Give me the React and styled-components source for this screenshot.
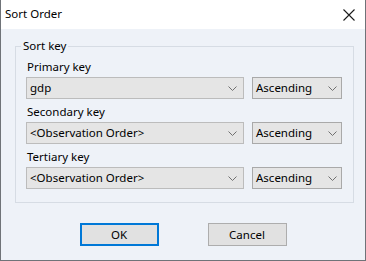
import styled, { createGlobalStyle } from "styled-components";

// --------------------------------------------------

const GlobalStyle = createGlobalStyle`
	html, body {
		margin: 0;
		padding: 0;
		background: #eef2f8;
	}
	body {
		font-family: "Noto Sans", "Liberation Sans", sans-serif;
		font-size: 11.5px;
		color: #000;
	}
`;

const Window = styled.div`
	width: 366px;
	height: 261px;
	box-sizing: border-box;
	display: flex;
	flex-direction: column;
	background: #eef2f8;
	border: 1px solid #6f7378;
	border-top: none;
	overflow: hidden;
`;

const TitleBar = styled.div`
	height: 29px;
	flex: none;
	display: flex;
	align-items: center;
	justify-content: space-between;
	background: #fff;
	padding: 0 10px 0 4px;
`;

const Title = styled.div`
	font-size: 11.5px;
	line-height: 16px;
	margin-top: -2px;
`;

const CloseButton = styled.div`
	width: 12px;
	height: 12px;
	display: flex;
	margin-top: 1px;
`;

const Body = styled.div`
	flex: 1;
	display: flex;
	flex-direction: column;
	padding: 9px 11px 0 14px;
`;

const Group = styled.fieldset`
	margin: 0;
	padding: 5px 11px 13px 10px;
	border: 1px solid #d6dce4;
	display: flex;
	flex-direction: column;
	gap: 5px;
	min-width: 0;
`;

const Legend = styled.legend`
	padding: 0 2px;
	margin-left: -5px;
	line-height: 16px;
`;

const KeyBlock = styled.div`
	display: flex;
	flex-direction: column;
	gap: 2px;
`;

const KeyLabel = styled.div`
	line-height: 16px;
	padding-left: 1px;
`;

const KeyRow = styled.div`
	display: flex;
	gap: 8px;
`;

const Combo = styled.div`
	width: ${p => p.$width}px;
	height: 22px;
	box-sizing: border-box;
	display: flex;
	align-items: center;
	justify-content: space-between;
	background: #e5e5e5;
	border: 1px solid ${p => p.$border};
	padding: 0 ${p => p.$chevronPad}px 0 ${p => p.$textPad}px;
	line-height: 16px;
	white-space: nowrap;
`;

const Buttons = styled.div`
	display: flex;
	justify-content: center;
	gap: 49px;
	margin-top: 20px;
	padding-right: 3px;
`;

const Button = styled.div`
	width: 79px;
	height: 23px;
	box-sizing: border-box;
	display: flex;
	align-items: center;
	justify-content: center;
	background: #e1e1e1;
	border: ${p => (p.$default ? "2px solid #0078d7" : "1px solid #adadad")};
	line-height: 16px;
`;

// --------------------------------------------------

const Chevron = () => (
	<svg width = "9" height = "5" viewBox = "0 0 9 5">
		<path d = "M0.5 0.5 L4.5 4.5 L8.5 0.5" fill = "none" stroke = "#707070" strokeWidth = "1" />
	</svg>
);

const CloseIcon = () => (
	<svg width = "12" height = "12" viewBox = "0 0 12 12">
		<path d = "M0.5 0.5 L11.5 11.5 M11.5 0.5 L0.5 11.5" stroke = "#1a1a1a" strokeWidth = "1.1" />
	</svg>
);

const keys = [
	{ label: "Primary key", value: "gdp", },
	{ label: "Secondary key", value: "<Observation Order>", },
	{ label: "Tertiary key", value: "<Observation Order>", },
];

const App = () => {
	return (
		<>
			<GlobalStyle />
			<Window>
				<TitleBar>
					<Title>Sort Order</Title>
					<CloseButton>
						<CloseIcon />
					</CloseButton>
				</TitleBar>

				<Body>
					<Group>
						<Legend>Sort key</Legend>

						{keys.map(k => (
							<KeyBlock key = {k.label}>
								<KeyLabel>{k.label}</KeyLabel>
								<KeyRow>
									<Combo $width = {218} $border = "#bcbcbc" $textPad = {3} $chevronPad = {6}>
										<span>{k.value}</span>
										<Chevron />
									</Combo>
									<Combo $width = {90} $border = "#a9a9a9" $textPad = {3} $chevronPad = {4}>
										<span>Ascending</span>
										<Chevron />
									</Combo>
								</KeyRow>
							</KeyBlock>
						))}
					</Group>

					<Buttons>
						<Button $default>OK</Button>
						<Button>Cancel</Button>
					</Buttons>
				</Body>
			</Window>
		</>
	);
};

export default App;
